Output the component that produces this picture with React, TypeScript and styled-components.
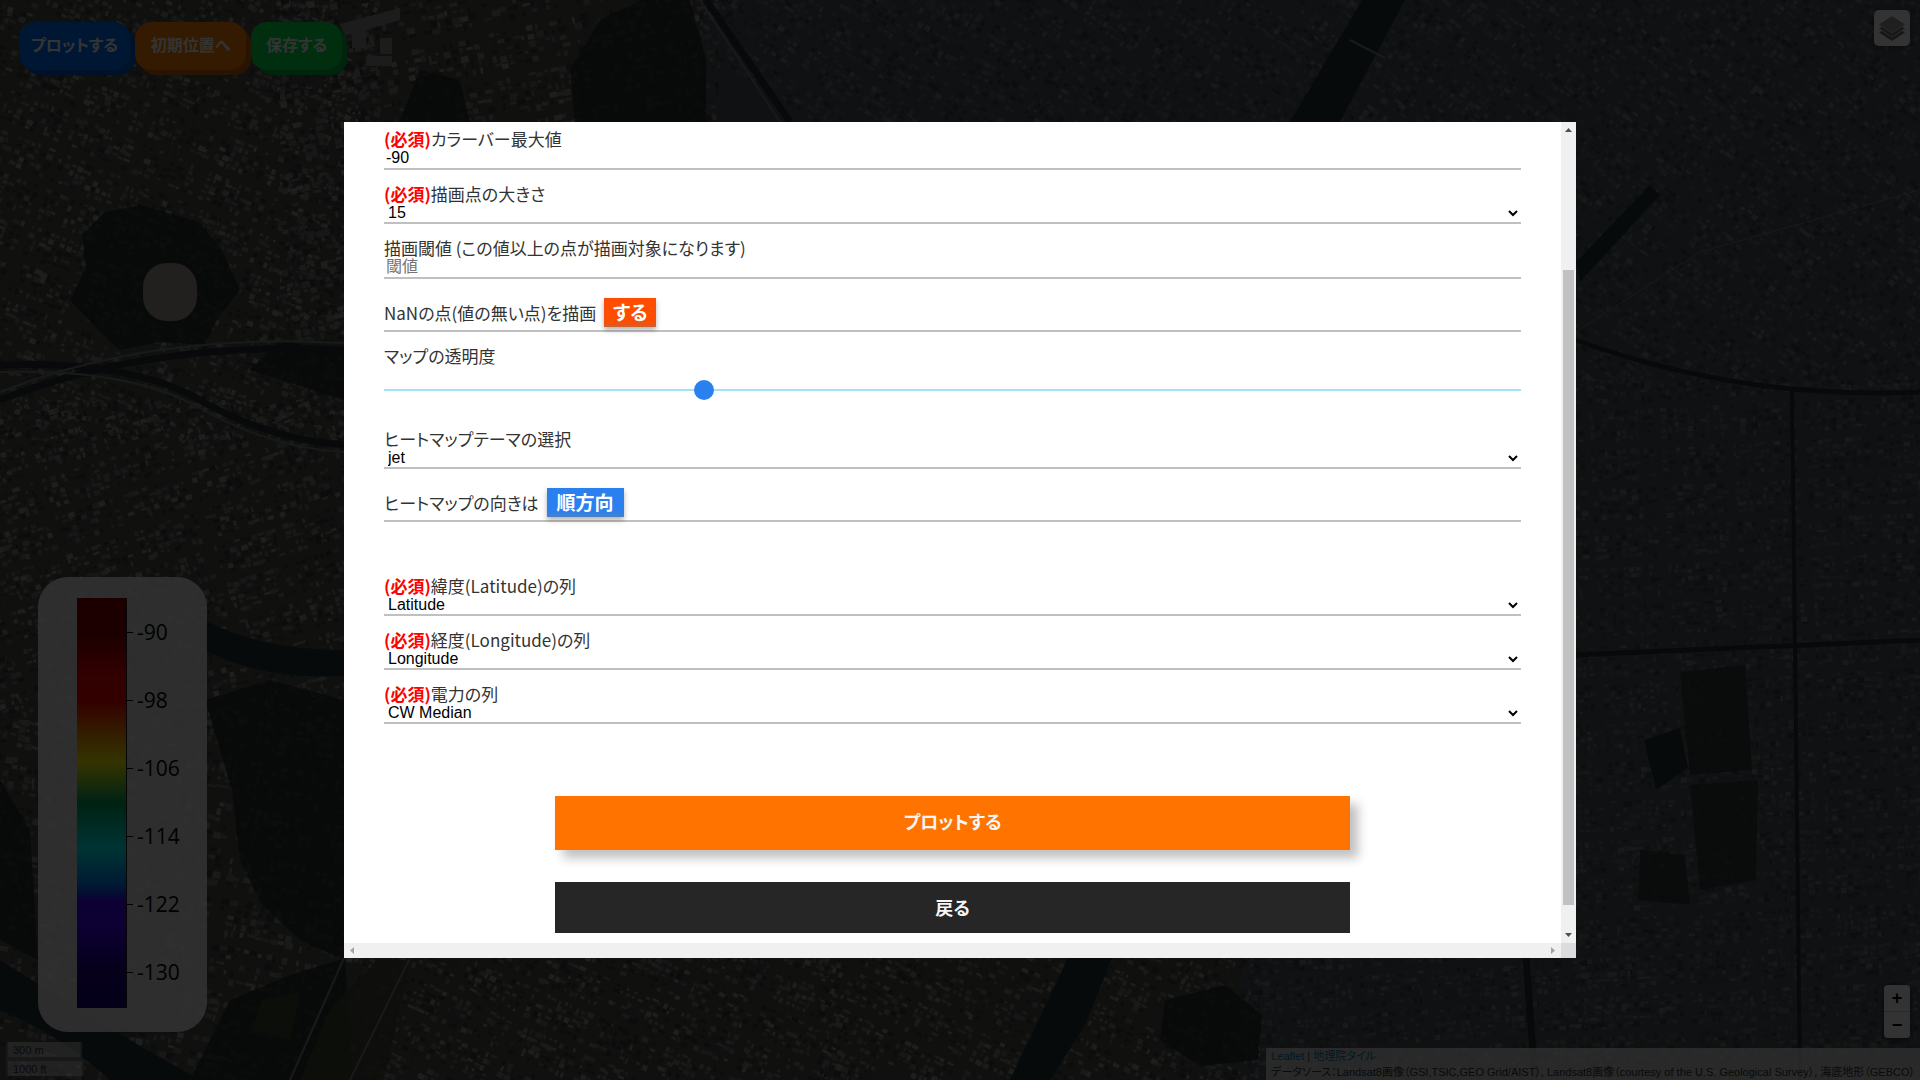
import React, { useCallback, useLayoutEffect, useMemo, useRef, useState } from "react";
import styled, { createGlobalStyle, css } from "styled-components";

const JP = `"Noto Sans CJK JP", sans-serif`;
const UI = `"Liberation Sans", "Noto Sans CJK JP", sans-serif`;

const GlobalStyle = createGlobalStyle`
  *, *::before, *::after { box-sizing: border-box; }
  html, body { margin: 0; height: 100%; overflow: hidden; }
  body { font-family: ${JP}; color: #333; background: #111; }
`;

/* Proportional kana; has to follow any font shorthand, which resets it. */
const palt = css`
  font-feature-settings: "palt";
`;

/* ---------- aerial map ---------- */

const MapSvg = styled.svg`
  position: absolute;
  inset: 0;
  width: 100%;
  height: 100%;
  display: block;
`;

type District = { x: number; y: number; w: number; h: number; angle: number; cell: number; tones: string[] };

const LEFT = ["#383c39", "#6e726e", "#80827d", "#4a4e4a", "#98988f", "#3f473f"];
const RIGHT = ["#3d4348", "#60666b", "#6a7075", "#4a5056", "#777d82", "#454b50"];

const DISTRICTS: District[] = [
  { x: -80, y: -120, w: 460, h: 560, angle: 22, cell: 5, tones: LEFT },
  { x: 240, y: -80, w: 480, h: 460, angle: -12, cell: 6, tones: LEFT },
  { x: -80, y: 350, w: 460, h: 380, angle: -18, cell: 5, tones: LEFT },
  { x: -60, y: 670, w: 420, h: 460, angle: 12, cell: 6, tones: LEFT },
  { x: 320, y: 890, w: 520, h: 250, angle: 24, cell: 5, tones: LEFT },
  { x: 660, y: -90, w: 680, h: 260, angle: 32, cell: 5, tones: RIGHT },
  { x: 1260, y: -90, w: 720, h: 480, angle: 38, cell: 5, tones: RIGHT },
  { x: 1530, y: 330, w: 450, h: 810, angle: -3, cell: 5, tones: RIGHT },
  { x: 780, y: 890, w: 480, h: 250, angle: 26, cell: 5, tones: LEFT },
  { x: 1210, y: 890, w: 420, h: 240, angle: -4, cell: 5, tones: RIGHT },
];

function makeRandom(seed: number) {
  let s = seed;
  return () => {
    s = (s * 1664525 + 1013904223) >>> 0;
    return s / 4294967296;
  };
}

function roofs(d: District, seed: number) {
  const rnd = makeRandom(seed);
  const paths = d.tones.map(() => "");
  let row = 0;
  for (let y = d.y; y < d.y + d.h; y += d.cell) {
    row += 1;
    if (row % 6 === 0) continue;
    let col = 0;
    for (let x = d.x; x < d.x + d.w; x += d.cell) {
      col += 1;
      if (col % 11 === 0 || rnd() < 0.06) continue;
      const tone = Math.floor(rnd() * (0.5 + 0.5 * rnd()) * d.tones.length);
      const w = 2 + Math.floor(rnd() * (d.cell - 1));
      const h = 2 + Math.floor(rnd() * (d.cell - 2));
      const px = Math.round(x + rnd());
      const py = Math.round(y + rnd());
      paths[tone] += `M${px} ${py}h${w}v${h}h${-w}z`;
    }
  }
  return paths;
}

function AerialMap() {
  const blocks = useMemo(() => DISTRICTS.map((d, i) => roofs(d, 97 + i * 31)), []);
  return (
    <MapSvg viewBox="0 0 1920 1080" preserveAspectRatio="xMidYMid slice" aria-hidden="true">
      <defs>
        {DISTRICTS.map((d, i) => (
          <clipPath key={i} id={`district${i}`}>
            <rect x={d.x + 40} y={d.y + 50} width={d.w - 40} height={d.h - 50} />
          </clipPath>
        ))}
      </defs>
      <rect width="1920" height="1080" fill="#4f534e" />
      <path d="M706 0H1920V1080H1240V400H706z" fill="#50565b" />
      {DISTRICTS.map((d, i) => (
        <g key={i} clipPath={`url(#district${i})`}>
          <g transform={`translate(${d.x + d.w / 2} ${d.y + d.h / 2}) rotate(${d.angle}) scale(1.3) translate(${-d.x - d.w / 2} ${-d.y - d.h / 2})`}>
            {blocks[i].map((p, k) => (
              <path key={k} d={p} fill={d.tones[k]} />
            ))}
          </g>
        </g>
      ))}
      {/* parks */}
      <g fill="#22302a" opacity="0.8">
        <path d="M82 235L105 212L140 205L172 214L200 222L222 250L240 290L218 318L205 345L160 342L120 350L98 330L70 300L86 268z" />
        <path d="M570 70L600 20L640 0H690L706 60V122H575z" />
        <path d="M385 150L400 120L420 70L460 80L470 122z" />
        <path d="M205 700L270 680L344 700V960L300 940L262 905L240 860L232 790z" />
        <path d="M230 1000L290 975L345 958L352 1080H190z" />
        <path d="M1165 1000L1225 985L1262 1015L1258 1060L1200 1066L1160 1040z" />
        <path d="M0 780L30 830L38 960L0 940z" />
        <path d="M344 350L310 346L280 340L262 358L250 370L344 400z" />
      </g>
      <g fill="#2e3836" opacity="0.8">
        <path d="M1680 672L1745 665L1752 770L1690 775z" />
        <path d="M1690 785L1758 780L1756 880L1700 890z" />
        <path d="M1640 850L1685 855L1690 905L1638 900z" />
      </g>
      <g fill="#454a38" opacity="0.8">
        <path d="M352 985L378 960H410L384 1080H300L330 1010z" />
        <path d="M262 1000L300 992L290 1040L252 1030z" />
      </g>
      {/* water */}
      <g fill="#253238">
        <path d="M1362 0H1405L1340 122H1290z" />
        <path d="M1576 262L1650 185L1660 195L1580 282z" />
        <path d="M1068 958H1112L1085 1025L1050 1080H1010z" />
        <path d="M1644 740L1680 728L1688 768L1656 790z" />
        <path d="M0 960Q40 985 80 1010T200 1080H110Q60 1035 0 1010z" />
        <path d="M205 620Q260 650 344 650V676Q260 680 205 650z" />
      </g>
      {/* railways and trunk roads */}
      <g fill="none" stroke="#2b3033" strokeWidth="7">
        <path d="M0 365Q130 360 200 400T345 445" />
        <path d="M0 400Q150 340 344 350" />
        <path d="M1576 340Q1740 400 1920 392" strokeWidth="5" />
        <path d="M1792 390L1800 1080" strokeWidth="4" />
        <path d="M1576 655L1920 640" strokeWidth="5" />
        <path d="M706 0L790 122" />
        <path d="M1526 958L1535 1080" />
      </g>
      <g fill="none" stroke="#7a8084" strokeWidth="2">
        <path d="M0 392Q150 332 344 343" />
        <path d="M0 372Q130 368 200 408T345 452" />
        <path d="M1350 40L1385 58" />
        <path d="M1576 332L1700 252L1920 190" strokeWidth="1" />
        <path d="M700 0L780 122" />
        <path d="M344 958L290 1080" />
        <path d="M410 958L350 1080" />
      </g>
      <rect x="143" y="263" width="54" height="58" rx="24" fill="#a39f99" />
      <path d="M340 24L400 8V20L345 36z" fill="#8b8e8c" />
      <path d="M352 30h14v18h-14zM380 38h12v16h-12zM366 56h26v10h-26z" fill="#8b8e8c" />
    </MapSvg>
  );
}

/* ---------- map controls ---------- */

const Page = styled.main`
  position: relative;
  min-height: 100vh;
  display: flex;
`;

const Hud = styled.div`
  position: relative;
  flex: 1;
  display: flex;
  justify-content: space-between;
`;

const HudColumn = styled.div<{ $end?: boolean }>`
  display: flex;
  flex-direction: column;
  justify-content: space-between;
  align-items: ${(p) => (p.$end ? "flex-end" : "flex-start")};
`;

const BottomGroup = styled.div<{ $end?: boolean }>`
  display: flex;
  flex-direction: column;
  align-items: ${(p) => (p.$end ? "flex-end" : "flex-start")};
  gap: 10px;
`;

const Toolbar = styled.nav`
  display: flex;
  gap: 5px;
  padding: 22px 19px;
`;

const ToolButton = styled.button<{ $w: number; $bg: string; $edge: string }>`
  width: ${(p) => p.$w}px;
  height: 48px;
  padding: 0 0 4px;
  border: 0;
  border-radius: 16px;
  background: ${(p) => p.$bg};
  box-shadow: 5px 5px 0 ${(p) => p.$edge};
  color: #fff;
  font: bold 16px/24px ${JP};
  ${palt}
`;

const LegendPanel = styled.section`
  margin-left: 38px;
  width: 169px;
  padding: 21px 0 24px 39px;
  border-radius: 30px;
  background: rgba(255, 255, 255, 0.85);
  display: flex;
`;

const LegendBar = styled.div`
  width: 50px;
  height: 410px;
  border-right: 1px solid #222;
  background: linear-gradient(
    #8c0000 0%, #8c0000 9%, #f00000 18%, #ff0000 25%, #ff9000 33%, #ffff00 40%,
    #00a860 50%, #00ffff 61%, #0080ff 70%, #4000ff 74%, #4400ff 80%, #22008c 90%, #180078 100%
  );
`;

const LegendTicks = styled.ol`
  margin: 0;
  padding: 0;
  list-style: none;
`;

const LegendTick = styled.li`
  height: 68px;
  display: flex;
  align-items: center;
  gap: 4px;
  color: #000;
  font: 21px/24px "Open Sans", sans-serif;
  &::before {
    content: "";
    width: 6px;
    height: 1px;
    background: #000;
  }
`;

const ScaleBox = styled.div`
  margin: 0 0 4px 6px;
  display: flex;
  flex-direction: column;
  align-items: flex-start;
`;

const ScaleLine = styled.span<{ $w: number; $flip?: boolean }>`
  width: ${(p) => p.$w}px;
  height: 17px;
  padding: 2px 5px 1px;
  border: 2px solid #777;
  border-top-width: ${(p) => (p.$flip ? "2px" : "0")};
  border-bottom-width: ${(p) => (p.$flip ? "0" : "2px")};
  background: rgba(255, 255, 255, 0.5);
  color: #333;
  font: 11px/12px ${UI};
`;

const LayersButton = styled.button`
  margin: 10px 10px 0 0;
  width: 36px;
  height: 36px;
  padding: 5px;
  border: 0;
  border-radius: 5px;
  background: #fff;
  box-shadow: 0 1px 5px rgba(0, 0, 0, 0.4);
`;

const ZoomGroup = styled.div`
  margin-right: 10px;
  width: 26px;
  border-radius: 4px;
  background: #fff;
  box-shadow: 0 1px 5px rgba(0, 0, 0, 0.65);
  display: grid;
  gap: 1px;
`;

const ZoomButton = styled.button`
  width: 26px;
  height: 26px;
  padding: 0;
  border: 0;
  background: transparent;
  color: #000;
  font: bold 18px/26px "Liberation Sans", sans-serif;
  & + & {
    box-shadow: 0 -1px 0 #ccc;
  }
`;

const Attribution = styled.footer`
  padding: 0 5px;
  background: rgba(255, 255, 255, 0.7);
  color: #333;
  font: 11px/16px ${UI};
  ${palt}
  a {
    color: #0078a8;
    text-decoration: none;
  }
`;

/* ---------- dialog ---------- */

const Backdrop = styled.div`
  position: absolute;
  inset: 0;
  display: flex;
  align-items: center;
  justify-content: center;
  background: rgba(0, 0, 0, 0.8);
`;

const Dialog = styled.div`
  width: calc(60% + 80px);
  height: calc(70% + 80px);
  background: #fff;
  display: grid;
  grid-template: minmax(0, 1fr) 15px / minmax(0, 1fr) 15px;
`;

const Viewport = styled.div`
  padding: 40px;
  overflow: auto;
  scrollbar-width: none;
`;

const Bar = styled.div<{ $vertical?: boolean }>`
  display: flex;
  flex-direction: ${(p) => (p.$vertical ? "column" : "row")};
  justify-content: space-between;
  background: #f0f0f0;
`;

const Arrow = styled.span`
  width: 15px;
  height: 15px;
  flex: none;
  display: grid;
  place-items: center;
`;

const Track = styled.div`
  flex: 1;
  padding: 0 2px;
`;

const Thumb = styled.div`
  width: 11px;
  background: #c1c1c1;
`;

const Corner = styled.div`
  background: #dcdcdc;
`;

const Form = styled.form`
  padding-top: 125px;
  display: flex;
  flex-direction: column;
`;

const Field = styled.div<{ $section?: boolean }>`
  margin-top: ${(p) => (p.$section ? "56px" : "16px")};
  display: flex;
  flex-direction: column;
`;

const Label = styled.label<{ $tight?: boolean }>`
  padding-bottom: ${(p) => (p.$tight ? "1px" : "2px")};
  font: 17px/16px ${JP};
  ${palt}
  color: #333;
`;

const Required = styled.strong`
  color: #f00;
`;

const TextBox = styled.input`
  width: 100%;
  height: 21px;
  padding: 0 2px 2px;
  border: 0;
  border-bottom: 2px solid #c0c0c0;
  background: transparent;
  color: #000;
  font: 16px/17px ${UI};
  outline: 0;
`;

const Select = styled.select`
  width: 100%;
  height: 21px;
  padding: 0 0 1px;
  border: 0;
  border-bottom: 2px solid #c0c0c0;
  background: transparent;
  color: #000;
  font: 16px/18px ${UI};
`;

const ToggleRow = styled.div`
  margin-top: 19px;
  padding-bottom: 3px;
  border-bottom: 2px solid #c0c0c0;
  display: flex;
  align-items: center;
  gap: 8px;
`;

const ToggleText = styled.span`
  font: 17px/18px ${JP};
  ${palt}
`;

const Toggle = styled.button<{ $w: number; $bg: string }>`
  width: ${(p) => p.$w}px;
  height: 29px;
  padding: 0 0 2px;
  border: 0;
  background: ${(p) => p.$bg};
  box-shadow: 0 3px 5px rgba(0, 0, 0, 0.3), inset 0 -4px 4px -2px rgba(128, 128, 128, 0.5);
  color: #fff;
  font: bold 19px/27px ${JP};
  ${palt}
`;

const Slider = styled.input`
  appearance: none;
  width: 100%;
  height: 20px;
  margin: 14px 0 15px;
  background: linear-gradient(#a2e2f4, #a2e2f4) center / 100% 2px no-repeat;
  &::-webkit-slider-thumb {
    appearance: none;
    width: 20px;
    height: 20px;
    border-radius: 50%;
    background: #2a80ee;
  }
`;

const Actions = styled.div`
  margin-top: 72px;
  display: flex;
  flex-direction: column;
  align-items: center;
  gap: 32px;
`;

const ActionButton = styled.button<{ $primary?: boolean }>`
  width: 70%;
  height: ${(p) => (p.$primary ? "54px" : "51px")};
  padding: 0 0 ${(p) => (p.$primary ? "4px" : "2px")};
  border: 0;
  background: ${(p) => (p.$primary ? "#ff7300" : "#262626")};
  box-shadow: ${(p) => (p.$primary ? "8px 8px 10px rgba(0, 0, 0, 0.25)" : "none")};
  color: #f5f5f5;
  font: bold 18px/28px ${JP};
  ${palt}
`;

type SelectFieldProps = { id: string; text: string; value: string; required?: boolean; section?: boolean };

function SelectField({ id, text, value, required, section }: SelectFieldProps) {
  return (
    <Field $section={section}>
      <Label htmlFor={id} $tight>
        {required && <Required>(必須)</Required>}
        {text}
      </Label>
      <Select id={id} defaultValue={value}>
        <option>{value}</option>
      </Select>
    </Field>
  );
}

function ArrowIcon({ angle, muted }: { angle: number; muted?: boolean }) {
  return (
    <Arrow>
      <svg width="15" height="15" viewBox="0 0 15 15" aria-hidden="true">
        <path d="M4 10L7.500 6L11 10z" transform={`rotate(${angle} 7.5 7.5)`} fill={muted ? "#a3a3a3" : "#505050"} />
      </svg>
    </Arrow>
  );
}

const TICKS = [-90, -98, -106, -114, -122, -130];

export default function App() {
  const view = useRef<HTMLDivElement>(null);
  const [opacity, setOpacity] = useState(25);
  const [thumb, setThumb] = useState({ top: 0, height: 0 });

  const measure = useCallback(() => {
    const el = view.current;
    if (!el) return;
    const track = el.clientHeight - 30;
    setThumb({
      top: Math.round((track * el.scrollTop) / el.scrollHeight),
      height: Math.round((track * el.clientHeight) / el.scrollHeight),
    });
  }, []);

  useLayoutEffect(() => {
    const el = view.current;
    if (el) el.scrollTop = el.scrollHeight - el.clientHeight - 30;
    measure();
    window.addEventListener("resize", measure);
    return () => window.removeEventListener("resize", measure);
  }, [measure]);

  return (
    <Page>
      <GlobalStyle />
      <AerialMap />
      <Hud>
        <HudColumn>
          <Toolbar>
            <ToolButton $w={111} $bg="#0073ff" $edge="#0058d0">プロットする</ToolButton>
            <ToolButton $w={111} $bg="#ff8000" $edge="#c86400">初期位置へ</ToolButton>
            <ToolButton $w={91} $bg="#00e64b" $edge="#00b43c">保存する</ToolButton>
          </Toolbar>
          <BottomGroup>
            <LegendPanel>
              <LegendBar />
              <LegendTicks>
                {TICKS.map((t) => (
                  <LegendTick key={t}>{t}</LegendTick>
                ))}
              </LegendTicks>
            </LegendPanel>
            <ScaleBox>
              <ScaleLine $w={76}>300 m</ScaleLine>
              <ScaleLine $w={78} $flip>1000 ft</ScaleLine>
            </ScaleBox>
          </BottomGroup>
        </HudColumn>
        <HudColumn $end>
          <LayersButton aria-label="Layers">
            <svg width="26" height="26" viewBox="0 0 26 26">
              <path d="M0 17.500L13 26L26 17.500L23 15.700L13 22L3 15.700z" fill="#747474" />
              <path d="M0 13.500L13 22L26 13.500L23 11.700L13 18L3 11.700z" fill="#747474" />
              <path d="M13 1L26 9.500L13 18L0 9.500z" fill="#9a9a9a" />
              <path d="M0 13.500L13 22L26 13.500M0 9.500L13 18L26 9.500" fill="none" stroke="#c8c8c8" />
            </svg>
          </LayersButton>
          <BottomGroup $end>
            <ZoomGroup>
              <ZoomButton>+</ZoomButton>
              <ZoomButton>−</ZoomButton>
            </ZoomGroup>
            <Attribution>
              <a href="#leaflet">Leaflet</a> | <a href="#tiles">地理院タイル</a>
              <br />
              データソース：Landsat8画像（GSI,TSIC,GEO Grid/AIST）, Landsat8画像（courtesy of the U.S. Geological Survey）, 海底地形（GEBCO）
            </Attribution>
          </BottomGroup>
        </HudColumn>
      </Hud>
      <Backdrop>
        <Dialog role="dialog" aria-modal="true">
          <Viewport ref={view} onScroll={measure}>
            <Form onSubmit={(e) => e.preventDefault()}>
              <Field>
                <Label htmlFor="max">
                  <Required>(必須)</Required>カラーバー最大値
                </Label>
                <TextBox id="max" defaultValue="-90" />
              </Field>
              <SelectField id="size" text="描画点の大きさ" value="15" required />
              <Field>
                <Label htmlFor="threshold">描画閾値 (この値以上の点が描画対象になります)</Label>
                <TextBox id="threshold" placeholder="閾値" />
              </Field>
              <ToggleRow>
                <ToggleText>NaNの点(値の無い点)を描画</ToggleText>
                <Toggle type="button" $w={52} $bg="#ff4d00">する</Toggle>
              </ToggleRow>
              <Field>
                <Label htmlFor="opacity">マップの透明度</Label>
                <Slider
                  id="opacity"
                  type="range"
                  min={0}
                  max={90}
                  value={opacity}
                  onChange={(e) => setOpacity(Number(e.target.value))}
                />
              </Field>
              <SelectField id="theme" text="ヒートマップテーマの選択" value="jet" />
              <ToggleRow>
                <ToggleText>ヒートマップの向きは</ToggleText>
                <Toggle type="button" $w={77} $bg="#2a80ee">順方向</Toggle>
              </ToggleRow>
              <SelectField id="lat" text="緯度(Latitude)の列" value="Latitude" required section />
              <SelectField id="lng" text="経度(Longitude)の列" value="Longitude" required />
              <SelectField id="power" text="電力の列" value="CW Median" required />
              <Actions>
                <ActionButton type="submit" $primary>プロットする</ActionButton>
                <ActionButton type="button">戻る</ActionButton>
              </Actions>
            </Form>
          </Viewport>
          <Bar $vertical>
            <ArrowIcon angle={0} />
            <Track>
              <Thumb style={{ height: thumb.height, marginTop: thumb.top }} />
            </Track>
            <ArrowIcon angle={180} />
          </Bar>
          <Bar>
            <ArrowIcon angle={-90} muted />
            <ArrowIcon angle={90} muted />
          </Bar>
          <Corner />
        </Dialog>
      </Backdrop>
    </Page>
  );
}
